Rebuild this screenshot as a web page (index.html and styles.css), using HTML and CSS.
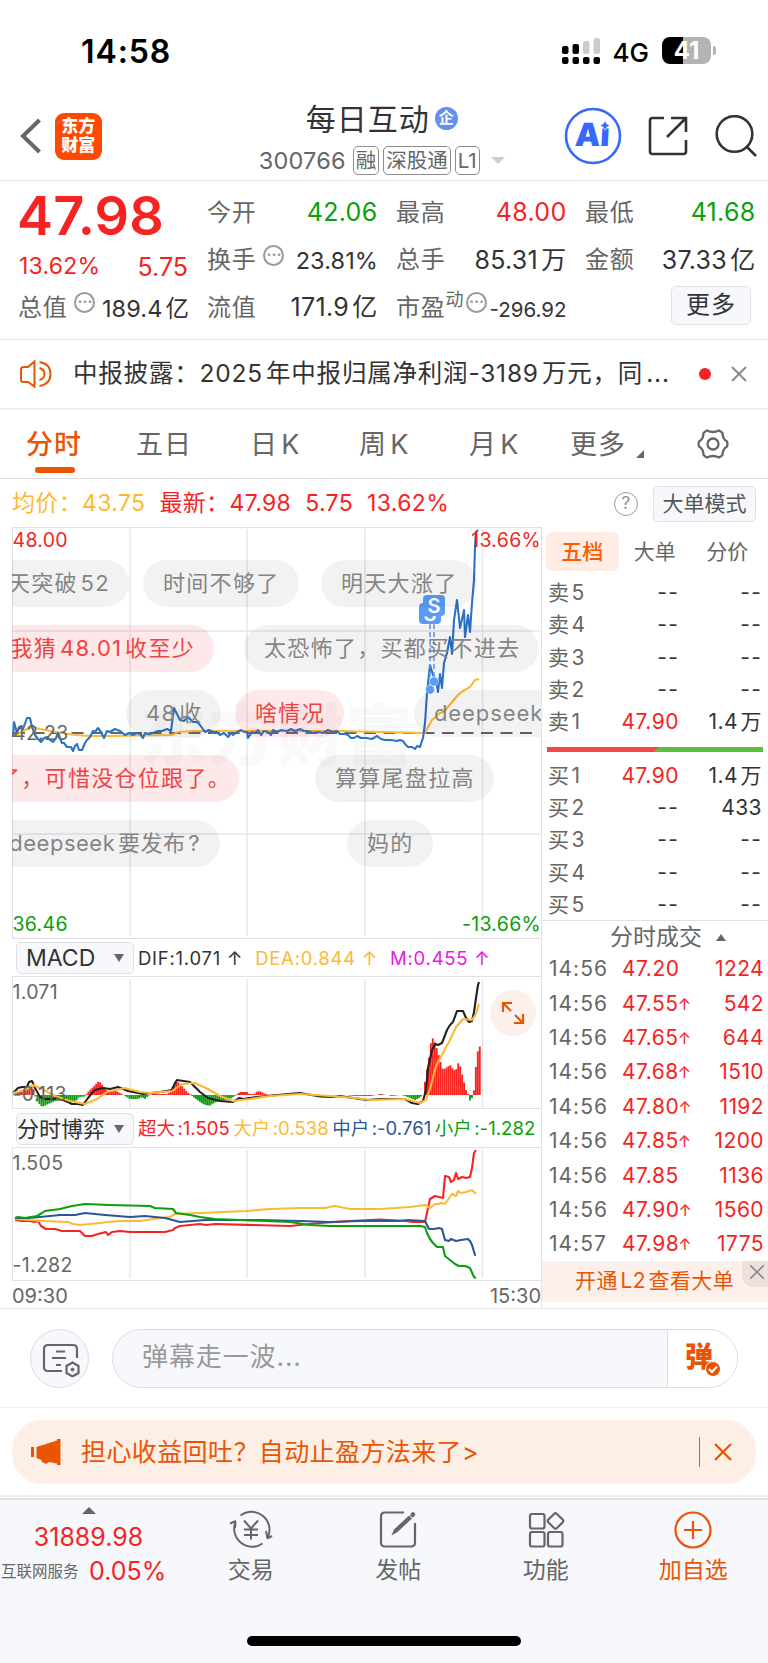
FILE: index.html
```html
<!DOCTYPE html>
<html lang="zh-CN">
<head>
    <meta charset="UTF-8">
    <meta name="viewport" content="width=device-width, initial-scale=1.0">
    <title>每日互动 300766</title>
    <link rel="stylesheet" href="styles.css">
</head>
<body>
    <div class="status">
        <span class="clock">14:58</span>
        <svg class="signal" width="40" height="28" viewBox="0 0 40 28">
            <g fill="#000">
                <rect x="1" y="9" width="6.5" height="8" rx="2"/><rect x="11.5" y="7" width="6.5" height="10" rx="2"/>
                <rect x="1" y="20" width="6.5" height="7" rx="2"/><rect x="11.5" y="20" width="6.5" height="7" rx="2"/>
                <rect x="22" y="20" width="6.5" height="7" rx="2"/><rect x="32.5" y="20" width="6.5" height="7" rx="2"/>
            </g>
            <g fill="#cbcbcb"><rect x="22" y="4" width="6.5" height="13" rx="2"/><rect x="32.5" y="1" width="6.5" height="16" rx="2"/></g>
        </svg>
        <span class="net">4G</span>
        <span class="battery">41</span>
    </div>

    <header class="header">
        <svg class="back" width="22" height="36" viewBox="0 0 22 36" fill="none" stroke="#666" stroke-width="4"><path d="M19.5 2 3 18l16.500 16"/></svg>
        <div class="logo">东方<br>财富</div>
        <div class="stock">
            <div class="stock-name">每日互动<span class="qi">企</span></div>
            <div class="stock-code"><span class="code">300766</span><i class="tag">融</i><i class="tag">深股通</i><i class="tag">L1</i><b class="tri-down"></b></div>
        </div>
        <svg class="ai" width="58" height="58" viewBox="0 0 58 58">
            <circle cx="29" cy="29" r="27" fill="none" stroke="#3868ff" stroke-width="2.600"/>
            <text x="10.500" y="39.500" transform="skewX(-3) translate(2 0)">Aı</text>
            <path d="M41 13.500q1 4 5 5q-4 1-5 5q-1-4-5-5q4-1 5-5z" fill="#3868ff" stroke="#fff" stroke-width=".5"/>
        </svg>
        <svg class="share" width="42" height="42" viewBox="0 0 42 42" fill="none" stroke="#333" stroke-width="2.600">
            <path d="M17 3H5.500Q3 3 3 5.500v31Q3 39 5.500 39h31q2.500 0 2.500-2.500V25M24 3h15v14M39 3 20 22"/>
        </svg>
        <svg class="search" width="42" height="42" viewBox="0 0 42 42" fill="none" stroke="#333" stroke-width="2.600"><circle cx="19.500" cy="19" r="17.800"/><path d="m31 31 10 10"/></svg>
    </header>

    <section class="quote">
        <div class="col">
            <div class="price">47.98</div>
            <div class="change"><span>13.62%</span><span>5.75</span></div>
            <div class="cell"><label>总值</label><i class="more-dot">···</i><span class="small">189.4亿</span></div>
        </div>
        <div class="col">
            <div class="cell"><label>今开</label><span class="green">42.06</span></div>
            <div class="cell"><label>换手</label><i class="more-dot">···</i><span class="small">23.81%</span></div>
            <div class="cell"><label>流值</label><span>171.9亿</span></div>
        </div>
        <div class="col">
            <div class="cell"><label>最高</label><span class="red">48.00</span></div>
            <div class="cell"><label>总手</label><span>85.31万</span></div>
            <div class="cell"><label>市盈<sup>动</sup></label><i class="more-dot tight">···</i><span class="tiny">-296.92</span></div>
        </div>
        <div class="col">
            <div class="cell"><label>最低</label><span class="green">41.68</span></div>
            <div class="cell"><label>金额</label><span>37.33亿</span></div>
            <div class="cell"><button class="more-btn">更多</button></div>
        </div>
    </section>

    <section class="notice">
        <svg width="34" height="30" viewBox="0 0 34 30" fill="none" stroke="#ea5504" stroke-width="2">
            <path d="M15.500 2.500v25L9 23H4.500Q2 23 2 20.500v-10Q2 8 4.500 8H9zM20.500 9q5 1.500 5 6t-5 6M20.500 3q11 2 11 12t-11 12"/>
        </svg>
        <p>中报披露：2025年中报归属净利润-3189万元，同...</p>
        <b class="dot"></b>
        <svg width="16" height="16" viewBox="0 0 16 16" stroke="#8c8c8c" stroke-width="2"><path d="m1 1 14 14M15 1 1 15"/></svg>
    </section>

    <nav class="tabs">
        <a class="active">分时</a><a>五日</a><a>日K</a><a>周K</a><a>月K</a><a>更多</a><b class="corner"></b>
        <svg width="34" height="34" viewBox="0 0 34 34" fill="none" stroke="#666" stroke-width="2.300">
            <path d="M11 3.500Q17 6.500 23 3.500Q25 4.500 26.500 6Q26.500 12 31 14.500Q32 17 31 19.500Q26.500 22 26.500 28Q25 29.500 23 30.500Q17 27.500 11 30.500Q9 29.500 7.500 28Q7.500 22 3 19.500Q2 17 3 14.500Q7.500 12 7.500 6Q9 4.500 11 3.500z" stroke-linejoin="round"/><circle cx="17" cy="17" r="5.500"/>
        </svg>
    </nav>

    <div class="info">
        <span class="yellow avg">均价：43.75</span>
        <span class="red latest">最新：47.98</span>
        <span class="red">5.75</span>
        <span class="red">13.62%</span>
        <i class="help">?</i>
        <button class="mode-btn">大单模式</button>
    </div>

    <main class="main">
        <div class="left">
            <div class="chart">
                <svg width="530" height="412" viewBox="12 527 530 412">
                    <g class="grid">
                        <path d="M12.500 939V527.500H542M541.500 527V939M12 938.500H542"/>
                        <path class="mid" d="M130 529V936M247 529V936M365 529V936M482.500 529V936M13 631H541M13 834H541"/>
                    </g>
                    <text class="watermark" x="140" y="760">东方财富</text>
                    <path class="dash" d="M13 733H539"/>
                    <polyline class="line y" points="13,736 20,733 25,730 32,727 40,729 50,731 62,733 75,735 90,736 110,736 172,735 178,732 195,731 250,731 340,731 425,733 428,727 432,720 440,713 444,712 448,707 452,702 458,695 463,691 470,687 475,680 479,679"/>
                    <polyline class="line b" points="13,737 14,722 17,733 19,727 23,729 27,718 30,718 32,727 35,735 38,739 41,742 44,738 47,737 50,740 53,742 56,738 58,733 62,743 64,743 67,747 71,747 73,751 75,746 77,744 79,750 82,750 85,743 87,740 90,737 93,731 95,732 98,728 101,732 104,738 107,731 110,732 115,729 120,731 125,735 129,733 133,735 137,733 140,734 143,738 145,733 149,734 153,733 158,731 162,731 167,729 171,731 174,708 176,712 180,720 184,721 188,717 193,722 197,722 200,725 205,732 209,730 213,732 217,732 220,735 224,733 228,737 231,733 233,735 237,732 241,730 244,732 247,732 248,738 252,732 255,733 258,730 261,735 264,731 268,732 271,735 273,730 277,732 281,730 287,731 291,729 295,731 300,729 304,731 308,731 313,733 318,732 323,733 328,730 333,732 337,731 340,734 345,734 348,735 351,738 354,738 357,736 361,738 366,738 372,739 377,736 381,739 385,740 391,740 397,741 400,740 403,741 405,744 408,747 412,747 415,749 417,746 420,747 423,738 425,723 427,693 430,665 433,675 436,680 438,692 440,674 442,688 444,663 447,653 450,637 452,654 454,620 457,600 460,628 463,615 464,610 465,637 468,615 470,632 472,603 474,580 475,547 476,532 478,530"/>
                    <g class="trade">
                        <path d="M430 624V686M434 624V678"/>
                        <circle cx="430" cy="689.500" r="4.500"/><circle cx="434" cy="681.500" r="4.500"/>
                        <rect x="419" y="603" width="22" height="21" rx="4"/><text x="430" y="621">S</text>
                        <rect x="423" y="595" width="22" height="21" rx="4"/><text x="434" y="613">S</text>
                    </g>
                    <text class="gray" x="13" y="740">42.23</text>
                    <text class="t-red" x="12.500" y="547">48.00</text><text class="t-red end" x="541" y="547">13.66%</text>
                    <text class="t-green" x="12.500" y="931">36.46</text><text class="t-green end" x="541" y="931">-13.66%</text>
                </svg>
                <div class="danmaku">
                    <span class="d1">明天突破52</span><span class="d2">时间不够了</span><span class="d3">明天大涨了</span>
                    <span class="d4 hot">我猜48.01收至少</span><span class="d5">太恐怖了，买都买不进去</span>
                    <span class="d6">48收</span><span class="d7 hot">啥情况</span><span class="d8">deepseek</span>
                    <span class="d9 hot">了，可惜没仓位跟了。</span><span class="d10">算算尾盘拉高</span>
                    <span class="d11">deepseek要发布?</span><span class="d12">妈的</span>
                </div>
            </div>

            <div class="subhead macd-head">
                <button>MACD<b></b></button>
                <span>DIF:1.071 ↑</span><span class="yellow">DEA:0.844 ↑</span><span class="purple">M:0.455 ↑</span>
            </div>
            <div class="sub">
                <svg width="530" height="133" viewBox="12 976 530 133">
                    <g class="grid">
                        <path d="M12.500 1109V976.500H542M541.500 976V1109M12 1108.500H542"/>
                        <path class="mid" d="M130 979V1107M247 979V1107M365 979V1107M482.500 979V1107"/>
                    </g>
                    <g id="hist"></g>
                    <polyline class="line k" points="13,1093 18,1088 22,1087 27,1087 29,1082 32,1081 35,1088 40,1097 45,1099 53,1099 58,1098 63,1100 68,1102 72,1104 78,1104 83,1105 88,1098 92,1093 95,1090 103,1088 110,1089 118,1087 128,1091 143,1094 160,1092 172,1090 175,1083 177,1080 190,1082 200,1092 208,1098 220,1101 233,1102 239,1098 243,1099 257,1097 277,1095 300,1093 320,1096.500 332,1097 340,1096 353,1098 367,1100 380,1099 405,1099 412,1103 418,1104 423,1101 426,1090 428,1068 432,1050 435,1044 438,1045 442,1043 447,1030 450,1025 453,1022 457,1011 463,1011 466,1018 469,1022 472,1021 474,1012 476,998 478,985 479,982"/>
                    <polyline class="line y" points="13,1093 25,1090 33,1085 42,1089 55,1096 70,1101 85,1104 97,1099 107,1092 125,1088 140,1092 150,1093 172,1091 182,1084 195,1083 208,1089 220,1096 233,1101 250,1099 270,1096 300,1094 330,1096 355,1098 370,1100 405,1099 420,1103 426,1100 430,1089 436,1066 443,1053 450,1040 456,1027 463,1019 472,1020 476,1014 479,1004"/>
                    <text class="gray" x="12.500" y="998.500">1.071</text>
                    <text class="gray" x="12.500" y="1101">-0.113</text>
                </svg>
                <div class="expand">
                    <svg width="24" height="24" viewBox="0 0 24 24" fill="none" stroke="#ea5504" stroke-width="2.200"><path d="M2 11V2h9M2 2l8 8M22 13v9h-9M22 22l-8-8"/></svg>
                </div>
            </div>

            <div class="subhead game-head">
                <button>分时博弈<b></b></button>
                <span class="red">超大:1.505</span><span class="yellow">大户:0.538</span><span class="blue">中户:-0.761</span><span class="green">小户:-1.282</span>
            </div>
            <svg width="530" height="134" viewBox="12 1147 530 134">
                <g class="grid">
                    <path d="M12.500 1281V1147.500H542M541.500 1147V1281M12 1280.500H542"/>
                    <path class="mid" d="M130 1150V1278M247 1150V1278M365 1150V1278M482.500 1150V1278"/>
                </g>
                <polyline class="line r" points="15,1220 22,1221 30,1221 34,1222 38,1221 41,1226 46,1229 55,1229 62,1231 70,1231 80,1231 85,1236 92,1236 98,1234 106,1232 108,1235 112,1232 120,1231 130,1232 165,1232 173,1230 175,1228 180,1226 200,1224 206,1225 215,1224 290,1226 320,1223 350,1221 380,1219.500 407,1221 412,1222 425,1222 428,1208 430,1199 435,1196 443,1198 445,1176 449,1177 451,1182 454,1180 456,1173 458,1179 462,1177 466,1178 470,1177 472,1168 474,1153 476,1150"/>
                <polyline class="line y" points="15,1219 30,1220 45,1221 68,1222 73,1224 80,1225 100,1223 108,1222 120,1221 140,1221 160,1218 170,1217 175,1214 200,1213 247,1211 270,1209 300,1208 325,1208 335,1206 350,1209 380,1209 410,1207 425,1205 430,1208 435,1204 438,1204 441,1203 445,1204 452,1194 456,1196 458,1191 461,1193 466,1192 472,1190 476,1194"/>
                <polyline class="line n" points="15,1218 28,1218 40,1217 60,1215 75,1215 85,1213 105,1215 130,1217 145,1216 165,1218 180,1222 205,1220 260,1220 300,1221 330,1222 360,1221 400,1221 408,1220 425,1221 429,1229 434,1229 439,1228 442,1229 445,1240 449,1241 451,1239 456,1241 461,1240 468,1239 470,1241 472,1245 475,1255 476,1255"/>
                <polyline class="line g" points="15,1218 18,1217 25,1218 37,1216 42,1213 45,1211 60,1209 72,1206 85,1204 110,1205 150,1206 155,1208 173,1209 176,1213 190,1215 200,1217 215,1219 240,1220 290,1222 310,1225 330,1226 420,1226 425,1227 427,1233 430,1239 433,1243 437,1247 443,1247 445,1256 450,1260 455,1264 459,1266 465,1266 470,1268 474,1277 476,1278"/>
                <text class="gray" x="12.500" y="1169.500">1.505</text>
                <text class="gray" x="12.500" y="1272">-1.282</text>
            </svg>
            <div class="times"><span>09:30</span><span>15:30</span></div>
        </div>

        <aside class="right">
            <div class="book-tabs"><a class="active">五档</a><a>大单</a><a>分价</a></div>
            <div class="book">
                <p><label>卖5</label><span class="none">--</span><em class="none">--</em></p>
                <p><label>卖4</label><span class="none">--</span><em class="none">--</em></p>
                <p><label>卖3</label><span class="none">--</span><em class="none">--</em></p>
                <p><label>卖2</label><span class="none">--</span><em class="none">--</em></p>
                <p><label>卖1</label><span class="red">47.90</span><em>1.4万</em></p>
            </div>
            <div class="ratio"></div>
            <div class="book">
                <p><label>买1</label><span class="red">47.90</span><em>1.4万</em></p>
                <p><label>买2</label><span class="none">--</span><em>433</em></p>
                <p><label>买3</label><span class="none">--</span><em class="none">--</em></p>
                <p><label>买4</label><span class="none">--</span><em class="none">--</em></p>
                <p><label>买5</label><span class="none">--</span><em class="none">--</em></p>
            </div>
            <div class="deal-title">分时成交<b></b></div>
            <div class="deals">
                <p><label>14:56</label><span>47.20</span><em>1224</em></p>
                <p><label>14:56</label><span>47.55<i>↑</i></span><em>542</em></p>
                <p><label>14:56</label><span>47.65<i>↑</i></span><em>644</em></p>
                <p><label>14:56</label><span>47.68<i>↑</i></span><em>1510</em></p>
                <p><label>14:56</label><span>47.80<i>↑</i></span><em>1192</em></p>
                <p><label>14:56</label><span>47.85<i>↑</i></span><em>1200</em></p>
                <p><label>14:56</label><span>47.85</span><em>1136</em></p>
                <p><label>14:56</label><span>47.90<i>↑</i></span><em>1560</em></p>
                <p><label>14:57</label><span>47.98<i>↑</i></span><em>1775</em></p>
            </div>
            <div class="l2">开通L2查看大单
                <div class="l2-close"><svg width="14" height="14" viewBox="0 0 14 14" stroke="#8c8c8c" stroke-width="1.600"><path d="m0 0 14 14M14 0 0 14"/></svg></div>
            </div>
        </aside>
    </main>

    <section class="comment">
        <div class="set-btn">
            <svg width="38" height="34" viewBox="0 0 38 34" fill="none" stroke="#666" stroke-width="2.200">
                <path d="M20 28H6q-4 0-4-4V6q0-4 4-4h25q4 0 4 4v9M14 8.500h9M10 15h14M14 22h5"/>
                <path d="m30.500 19.500 6 3.500v7l-6 3.500-6-3.500v-7z"/><circle cx="30.500" cy="26.500" r="1.500" fill="#666" stroke-width="1"/>
            </svg>
        </div>
        <div class="input"><span>弹幕走一波...</span>
            <div class="send">弹<svg width="16" height="16" viewBox="0 0 16 16"><circle cx="8" cy="8" r="7.500" fill="#ea5504" stroke="#fff"/><path d="m4 8 3 3 5-5.500" fill="none" stroke="#fff" stroke-width="2"/></svg></div>
        </div>
    </section>

    <section class="promo">
        <div class="promo-box">
            <svg width="30" height="26" viewBox="0 0 30 26" fill="#ea5504"><path d="M0 8h3v10H0zM5.500 8 26 1.500V0h3.500v26H26v-1.500l-8-1.500-3 2-4-2-.5-2-5-2z"/></svg>
            <span>担心收益回吐？自动止盈方法来了&gt;</span>
            <b></b>
            <svg width="18" height="18" viewBox="0 0 18 18" stroke="#ea5504" stroke-width="2.200"><path d="m1 1 16 16M17 1 1 17"/></svg>
        </div>
    </section>

    <footer class="toolbar">
        <div class="index">
            <b></b>
            <div class="index-num">31889.98</div>
            <div class="index-row"><small>互联网服务</small>0.05%</div>
        </div>
        <a>
            <svg width="44" height="40" viewBox="0 0 44 40" fill="none" stroke="#666" stroke-width="2">
                <path d="M11.500 5.500A18 18 0 0 1 38.500 28M38 28.500l5-2.500M38.500 28.500 37 21M33.500 33.500A18 18 0 0 1 6.500 12M1 13.500l6-2.500M6.500 11.500 6 18M15 10.500l7 8 7-8M22 18.500V29.500M15 19.500h14M15 25h14"/>
            </svg>交易
        </a>
        <a>
            <svg width="40" height="40" viewBox="0 0 40 40" fill="none" stroke="#666" stroke-width="2.200">
                <path d="M26 2.500H7Q3 2.500 3 6.500v26q0 4 4 4h26q4 0 4-4V13"/><path d="m13.500 25.500 2.500-6L31 5.500l3 3L19.500 22z" fill="#666" stroke="none"/><path d="m34.500 5 .5-.500" stroke-width="4.500" stroke-linecap="round"/>
            </svg>发帖
        </a>
        <a>
            <svg width="40" height="40" viewBox="0 0 40 40" fill="none" stroke="#666" stroke-width="2.200">
                <rect x="4" y="4" width="14.500" height="14.500" rx="2"/><rect x="4" y="22" width="14.500" height="14.500" rx="2"/><rect x="22" y="22" width="14.500" height="14.500" rx="2"/><rect x="23.500" y="5" width="12" height="12" rx="2" transform="rotate(45 29.500 11)"/>
            </svg>功能
        </a>
        <a class="add">
            <svg width="40" height="40" viewBox="0 0 40 40" fill="none" stroke="#ea5504" stroke-width="2.200"><circle cx="20" cy="20" r="17.500"/><path d="M11 20h18M20 11v18"/></svg>加自选
        </a>
        <div class="home"></div>
    </footer>

    <script>
        // MACD histogram: [x, height] key points, one bar per minute
        const keys = [[13,0],[20,4],[27,8],[33,8],[35,0],[37,-6],[42,-12],[46,-10],[55,-6],[62,-5],[70,-7],[76,-6],[79,-2],[85,-1.5],[87,2],[93,8],[99,14],[103,9],[107,4],[116,4],[122,1],[125,-1],[130,-4],[138,-4],[142,-2],[145,-4],[148,-1],[152,1],[168,1],[171,6],[177,14],[182,9],[187,3],[191,0],[196,-4],[203,-9],[209,-11],[216,-7],[225,-5],[232,-3],[236,0],[240,3],[247,3],[249,1],[254,1],[258,4],[262,3],[265,1],[270,0],[277,1],[279,.5],[300,.5],[305,0],[345,0],[355,-1],[370,-1],[377,0],[380,1],[388,0],[392,-1],[400,0],[405,-1],[410,-3],[415,-5],[419,-3],[423,0],[426,20],[429,38],[431,53],[433,57],[435,52],[437,46],[440,35],[443,25],[447,28],[451,30],[453,25],[456,25],[459,34],[461,25],[463,17],[466,5],[468.5,0],[470,-5.5],[472,-3],[474,5],[476,30],[478,45],[480,49]];
        const hist = document.getElementById('hist');
        let k = 0;
        for (let x = 14; x <= 480; x += 1.957) {
            while (keys[k + 1][0] < x) k++;
            const [x0, h0] = keys[k];
            const [x1, h1] = keys[k + 1];
            const h = h0 + (h1 - h0) * (x - x0) / (x1 - x0);
            if (Math.abs(h) < 0.3) continue;
            const bar = document.createElementNS('http://www.w3.org/2000/svg', 'rect');
            bar.setAttribute('x', x - 0.95);
            bar.setAttribute('y', h > 0 ? 1095 - h : 1095);
            bar.setAttribute('width', 1.9);
            bar.setAttribute('height', Math.abs(h));
            bar.setAttribute('fill', h > 0 ? '#f62323' : '#0aa00a');
            hist.appendChild(bar);
        }
    </script>
</body>
</html>
```
FILE: styles.css
```css
* {
    box-sizing: border-box;
}

body {
    margin: 0;
    width: 768px;
    height: 1663px;
    overflow: hidden;
    background: #fff;
    color: #333;
    font-family: Inter, "Noto Sans CJK SC", sans-serif;
    font-size: 24px;
    line-height: 1;
    white-space: nowrap;
    text-autospace: normal;
}

p {
    margin: 0;
}

i, em {
    font-style: normal;
}

svg {
    display: block;
    flex: none;
}

button {
    font: inherit;
    color: #333;
    padding: 0;
    background: #f7f8fb;
    border: 1.5px solid #dfe1e7;
    border-radius: 5px;
}

.red { color: #f62323; }
.green { color: #0aa00a; }
.yellow { color: #fdb933; }
.blue { color: #2f5597; }
.purple { color: #e619e6; }

/* status bar */
.status {
    height: 100px;
    padding: 4px 53px 0 81px;
    display: flex;
    align-items: center;
    color: #000;
}

.clock {
    font-size: 32px;
    font-weight: 600;
    letter-spacing: 0.9px;
    flex: 1;
}

.signal {
    margin-top: -2px;
}

.net {
    font-size: 26px;
    font-weight: 500;
    margin: 1px 13px 0 12px;
}

.battery {
    position: relative;
    width: 49px;
    height: 27px;
    line-height: 28px;
    margin: -3px 4px 0 0;
    border-radius: 8px;
    background: linear-gradient(90deg, #000 42%, #b3b3b3 42%);
    color: #fff;
    font-size: 24px;
    font-weight: 700;
    text-align: center;
}

.battery::after {
    content: "";
    position: absolute;
    right: -5px;
    top: 9px;
    width: 3px;
    height: 9px;
    border-radius: 0 4px 4px 0;
    background: #b3b3b3;
}

/* header */
.header {
    height: 81px;
    border-bottom: 1px solid #e3e3e3;
    display: flex;
    align-items: center;
    padding: 0 11px 8px 20px;
}

.logo {
    width: 47px;
    height: 47px;
    margin-left: 13px;
    border-radius: 9px;
    background: #ff4800;
    color: #fff;
    font-size: 17px;
    font-weight: 900;
    line-height: 19px;
    text-align: center;
    padding-top: 4px;
}

.stock {
    margin-left: 158px;
    width: 247px;
    padding-top: 8px;
}

.stock-name {
    font-size: 30px;
    letter-spacing: 1px;
    display: flex;
    align-items: center;
    padding-left: 46px;
    height: 30px;
    margin-top: -1px;
}

.qi {
    width: 23px;
    height: 23px;
    line-height: 22px;
    margin: -1px 0 0 5px;
    border-radius: 50%;
    background: #6590ee;
    color: #fff;
    font-size: 15px;
    font-weight: 700;
    text-align: center;
    letter-spacing: 0;
}

.stock-code {
    display: flex;
    align-items: center;
    color: #666;
    margin-top: 12px;
    height: 30px;
}

.code {
    width: 94px;
    font-size: 23.5px;
    letter-spacing: 0.2px;
    margin-left: -1px;
}

.tag {
    height: 29px;
    line-height: 27px;
    padding: 0 2px;
    margin-right: 4px;
    border: 1.5px solid #8c8c8c;
    border-radius: 5px;
    font-size: 20.5px;
}

.tri-down {
    margin-left: 7px;
    border: 7px solid transparent;
    border-top-color: #ccc;
    border-bottom: 0;
}

.ai {
    margin-left: 59px;
}

.ai text {
    font-size: 32px;
    font-weight: 900;
    fill: #3868ff;
}

.share {
    margin-left: 25px;
}

.search {
    margin-left: 26px;
}

/* quote */
.quote {
    height: 159px;
    border-bottom: 1px solid #e6e6e6;
    display: flex;
    gap: 20px;
    padding: 8px 13px 0 19px;
}

.col {
    flex: 1;
    min-width: 0;
}

.price {
    height: 59px;
    line-height: 54px;
    font-size: 54px;
    font-weight: 600;
    letter-spacing: 0.2px;
    color: #f62323;
    margin-left: -2px;
}

.change {
    height: 36px;
    display: flex;
    align-items: center;
    justify-content: space-between;
    color: #f62323;
}

.change span {
    font-size: 25px;
    padding-top: 2px;
}

.change span:first-child {
    font-size: 23px;
    letter-spacing: 0.2px;
    padding-top: 0;
}

.cell {
    height: 47.5px;
    display: flex;
    align-items: center;
}

.cell label {
    color: #666;
    margin-left: -1px;
    letter-spacing: 0.7px;
}

.cell sup {
    font-size: 18px;
    line-height: 0;
    vertical-align: 10px;
}

.cell span {
    margin-left: auto;
    font-size: 25px;
    letter-spacing: 0.3px;
    margin-right: -0.5px;
}

.cell .small {
    font-size: 23.5px;
    letter-spacing: 0.1px;
    padding-top: 1px;
    margin-right: -1px;
}

.cell .tiny {
    font-size: 20.5px;
    letter-spacing: 0;
    padding-top: 5px;
}

.more-dot {
    flex: none;
    width: 21px;
    height: 21px;
    margin: 0 0 10px 7px;
    border: 2px solid #999;
    border-radius: 50%;
    font-size: 15px;
    font-weight: 700;
    line-height: 16px;
    text-align: center;
    color: #999;
}

.more-dot.tight {
    margin-left: 2px;
}

.more-btn {
    width: 80px;
    height: 39px;
    margin: -5px 4px 0 auto;
    letter-spacing: 1px;
}

/* notice */
.notice {
    height: 70px;
    border-bottom: 2px solid #efefef;
    display: flex;
    align-items: center;
    padding: 0 21px 1px 19px;
}

.notice p {
    width: 623px;
    padding-left: 20px;
    font-size: 24.5px;
    letter-spacing: 0.8px;
}

.dot {
    width: 12px;
    height: 12px;
    border-radius: 50%;
    background: #f62323;
    margin: 0 20px 0 24px;
}

/* tabs */
.tabs {
    height: 69px;
    border-bottom: 1.5px solid #dcdde3;
    display: flex;
    align-items: center;
    padding: 0 38px 0 26px;
    color: #666;
    font-size: 27px;
}

.tabs a {
    width: 110px;
    letter-spacing: 1px;
    position: relative;
}

.tabs a:nth-child(2) { width: 114px; }
.tabs a:nth-child(3) { width: 109px; }
.tabs a:nth-child(5) { width: 101px; }
.tabs a:nth-child(6) { width: 66px; }

.tabs .active {
    color: #ea5504;
    font-weight: 500;
}

.tabs .active::after {
    content: "";
    position: absolute;
    left: 9px;
    top: 36px;
    width: 40px;
    height: 6px;
    border-radius: 3px;
    background: #ea5504;
}

.corner {
    border: 4px solid #666;
    border-left-color: transparent;
    border-top-color: transparent;
    margin-top: 19px;
}

.tabs svg {
    margin-left: auto;
}

/* average / latest row */
.info {
    height: 48px;
    display: flex;
    align-items: center;
    padding: 1px 12px 0 12px;
    font-size: 23px;
    letter-spacing: 0.35px;
}

.info span {
    margin-right: 14px;
}

.help {
    width: 24px;
    height: 24px;
    line-height: 21px;
    margin: 0 15px 0 auto;
    border: 1.5px solid #999;
    border-radius: 50%;
    color: #8c8c8c;
    font-size: 17px;
    text-align: center;
}

.mode-btn {
    width: 103px;
    height: 36px;
    color: #555;
    font-size: 21px;
}

/* charts */
.main {
    height: 782px;
    border-bottom: 1px solid #ececec;
    display: flex;
}

.left {
    width: 542px;
    padding-left: 12px;
}

.chart, .sub {
    position: relative;
}

.grid path {
    fill: none;
    stroke: #dfe1e7;
    stroke-width: 1;
}

.grid .mid {
    stroke: #e4e7ef;
    stroke-width: 1.5;
}

.watermark {
    font-size: 67px;
    font-weight: 900;
    letter-spacing: 1.5px;
    fill: #000;
    fill-opacity: 0.025;
}

.dash {
    stroke: #666;
    stroke-width: 2;
    stroke-dasharray: 12 7.5;
}

.line {
    fill: none;
    stroke-width: 2.1;
    stroke-linejoin: round;
}

.line.y { stroke: #fdb933; }
.line.b { stroke: #2b73c4; }
.line.k { stroke: #222; }
.line.r { stroke: #f62323; }
.line.n { stroke: #2f5597; }
.line.g { stroke: #0aa00a; }

svg .gray, .t-red, .t-green {
    font-size: 19.5px;
    letter-spacing: 0.3px;
    fill: #666;
}

.t-red { fill: #f62323; }
.t-green { fill: #0aa00a; }

.end {
    text-anchor: end;
}

.trade path {
    stroke: #5b9bf8;
    stroke-width: 1.5;
    stroke-dasharray: 5 3;
}

.trade circle {
    fill: #5b9bf8;
    stroke: #fff;
    stroke-width: 0.5;
}

.trade rect {
    fill: #5b9bf8;
}

.trade text {
    font-size: 20px;
    font-weight: 600;
    fill: #fff;
    text-anchor: middle;
}

.danmaku {
    position: absolute;
    inset: 0 1px 0 0;
    overflow: hidden;
    font-size: 22px;
    letter-spacing: 1.3px;
    color: #858585;
}

.danmaku span {
    position: absolute;
    height: 47px;
    line-height: 46px;
    padding: 0 19px 0 20px;
    border-radius: 24px;
    background: rgba(0, 0, 0, 0.05);
}

.danmaku .hot {
    color: #ee4343;
    background: rgba(240, 40, 40, 0.1);
}

.d1, .d2, .d3 { top: 33px; }
.d4, .d5 { top: 98px; }
.d6, .d7, .d8 { top: 163px; }
.d9, .d10 { top: 228px; }
.d11, .d12 { top: 293px; }

.d1 { right: 412px; }
.d2 { left: 131px; }
.d3 { left: 309px; }
.d4 { right: 327px; }
.d5 { left: 232px; }
.d6 { left: 114px; }
.d7 { left: 223px; }
.danmaku .d8 { left: 402px; letter-spacing: 0.9px; }
.danmaku .d9 { right: 302px; padding-right: 8px; }
.d10 { left: 303px; }
.danmaku .d11 { right: 321px; letter-spacing: 0.5px; padding-right: 20px; }
.d12 { left: 335px; }

.subhead {
    height: 37px;
    display: flex;
    align-items: center;
    padding: 1px 0 0 4px;
    border-right: 1px solid #dfe1e7;
    font-size: 18.5px;
}

.subhead button {
    width: 118px;
    height: 32px;
    margin-right: 4px;
    display: flex;
    align-items: center;
    justify-content: space-between;
    padding: 0 9px;
    font-size: 23px;
}

.subhead button b {
    border: 5px solid transparent;
    border-top: 8px solid #666;
    border-bottom: 0;
}

.macd-head span {
    margin-right: 12px;
    letter-spacing: 0.75px;
}

.game-head {
    height: 38px;
}

.game-head button {
    padding-left: 0;
    font-size: 22px;
}

.game-head span {
    margin-right: 3.5px;
    letter-spacing: 0.05px;
}

.expand {
    position: absolute;
    left: 478px;
    top: 14px;
    width: 46px;
    height: 46px;
    border-radius: 50%;
    background: #fdf0ea;
    display: flex;
    align-items: center;
    justify-content: center;
}

.times {
    height: 27px;
    display: flex;
    align-items: center;
    justify-content: space-between;
    padding-top: 3px;
    border-right: 1px solid #dfe1e7;
    color: #666;
    font-size: 20px;
}

/* order book */
.right {
    flex: 1;
    color: #333;
    font-size: 21px;
}

.book-tabs {
    height: 49px;
    padding: 5px 4px;
    display: flex;
    line-height: 39px;
    text-align: center;
    color: #666;
}

.book-tabs a {
    width: 72.5px;
}

.book-tabs .active {
    border-radius: 6px;
    background: #ffede5;
    color: #ff5a00;
    font-weight: 500;
}

.book p, .deals p {
    height: 32.3px;
    display: flex;
    align-items: center;
    padding: 0 6px;
}

.book p {
    padding-top: 1px;
}

.right label {
    width: 50px;
    color: #666;
}

.right p span {
    width: 81px;
    text-align: right;
    letter-spacing: 0.5px;
}

.right em {
    flex: 1;
    text-align: right;
    letter-spacing: 0.4px;
}

.right p .none {
    letter-spacing: 1.2px;
}

.ratio {
    height: 5px;
    margin: 10px 5px 6px;
    background: linear-gradient(135deg, #ee4848 50.5%, #5bbf3f 50.5%);
}

.deal-title {
    height: 31px;
    border-top: 1.5px solid #dfe1e7;
    display: flex;
    align-items: center;
    padding: 3px 0 0 68px;
    color: #666;
    font-size: 23px;
}

.deal-title b {
    margin-left: 14px;
    border: 5px solid transparent;
    border-bottom: 7px solid #666;
    border-top: 0;
}

.deals p {
    height: 34.4px;
    color: #f62323;
    padding: 1px 4px 0 7px;
}

.deals label {
    width: 73px;
    letter-spacing: 1px;
}

.deals p span {
    width: 80px;
    text-align: left;
}

.deals i {
    font-size: 16px;
    margin-left: -1px;
    vertical-align: 1px;
}

.l2 {
    position: relative;
    height: 41px;
    line-height: 39px;
    margin-top: 1px;
    padding-left: 33px;
    background: #fdf0ea;
    color: #ea5504;
    letter-spacing: 0.4px;
}

.l2-close {
    position: absolute;
    right: 0;
    top: 0;
    width: 26px;
    height: 26px;
    padding: 4px 0 0 8px;
    border-radius: 0 0 0 12px;
    background: #ebe0db;
}

/* comment input */
.comment {
    height: 99px;
    border-bottom: 1px solid #f0f0f0;
    display: flex;
    padding: 20px 30px;
}

.set-btn {
    width: 59px;
    height: 59px;
    margin-right: 23px;
    padding: 13px 0 0 11px;
    border: 1px solid #dcdde5;
    border-radius: 50%;
    background: #f7f8fb;
}

.input {
    width: 626px;
    height: 59px;
    line-height: 53px;
    display: flex;
    border: 1px solid #dcdde5;
    border-radius: 30px;
    background: #f7f8fb;
    overflow: hidden;
    color: #999;
    font-size: 26px;
    letter-spacing: 0.9px;
    text-autospace: no-autospace;
}

.input span {
    flex: 1;
    padding-left: 29px;
}

.send {
    position: relative;
    width: 70px;
    padding-left: 17px;
    line-height: 55px;
    border-left: 1px solid #dcdde5;
    background: #fff;
    color: #ea5504;
    font-size: 28px;
    font-weight: 900;
}

.send svg {
    position: absolute;
    left: 37px;
    top: 31px;
}

/* promo */
.promo {
    height: 89px;
    padding: 12px 12px 0;
    border-bottom: 2px solid #efefef;
}

.promo-box {
    height: 64px;
    border-radius: 30px;
    background: #fdeee6;
    color: #ea5504;
    display: flex;
    align-items: center;
    padding: 0 24px 0 19px;
    font-size: 25px;
}

.promo-box span {
    flex: 1;
    margin-left: 20px;
    padding-top: 1px;
    letter-spacing: 0.4px;
}

.promo-box b {
    width: 1.5px;
    height: 30px;
    margin-right: 14px;
    background: #ea5504;
}

/* bottom bar */
.toolbar {
    position: relative;
    height: 165px;
    margin-top: 1px;
    border-top: 2px solid #dfe1e5;
    background: #f7f8fb;
    display: flex;
    color: #666;
    font-size: 23px;
}

.index {
    width: 177px;
    color: #f62323;
    text-align: center;
}

.index b {
    display: block;
    width: 0;
    margin: 7px auto 11px;
    border: 7px solid transparent;
    border-bottom-color: #666;
    border-top: 0;
}

.index-num {
    font-size: 25px;
}

.index-row {
    display: flex;
    align-items: center;
    margin-top: 9px;
    font-size: 25px;
}

.index small {
    width: 89px;
    text-align: left;
    padding-left: 1px;
    font-size: 15.5px;
    color: #666;
}

.toolbar a {
    width: 147.5px;
    padding-top: 10px;
    display: flex;
    flex-direction: column;
    align-items: center;
    gap: 9px;
}

.toolbar .add {
    color: #ea5504;
}

.home {
    position: absolute;
    left: 247px;
    bottom: 17px;
    width: 274px;
    height: 10px;
    border-radius: 5px;
    background: #000;
}
```
